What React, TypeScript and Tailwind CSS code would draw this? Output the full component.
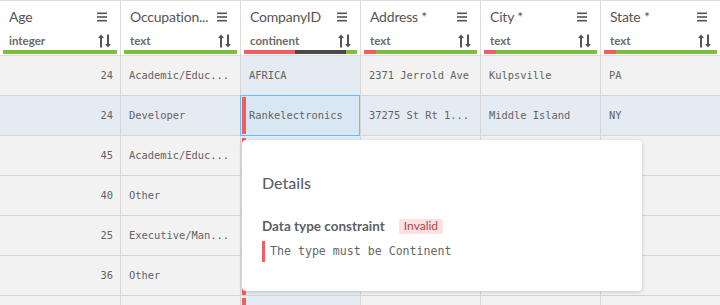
import React from "react";

const sans = { fontFamily: "Lato, 'Open Sans', sans-serif" };
const mono = { fontFamily: "'DejaVu Sans Mono', 'Liberation Mono', monospace" };

type Seg = { color: string; w: number };
type Col = { title: string; type: string; bar: Seg[] };

const cols: Col[] = [
  { title: "Age", type: "integer", bar: [{ color: "#80bc41", w: 1 }] },
  { title: "Occupation...", type: "text", bar: [{ color: "#80bc41", w: 1 }] },
  {
    title: "CompanyID",
    type: "continent",
    bar: [
      { color: "#ee5e63", w: 51 },
      { color: "#4a4a4a", w: 51 },
      { color: "#80bc41", w: 11 },
    ],
  },
  { title: "Address *", type: "text", bar: [{ color: "#ee5e63", w: 12 }, { color: "#80bc41", w: 101 }] },
  { title: "City *", type: "text", bar: [{ color: "#ee5e63", w: 12 }, { color: "#80bc41", w: 101 }] },
  { title: "State *", type: "text", bar: [{ color: "#ee5e63", w: 12 }, { color: "#80bc41", w: 101 }] },
];

const rows: string[][] = [
  ["24", "Academic/Educ...", "AFRICA", "2371 Jerrold Ave", "Kulpsville", "PA"],
  ["24", "Developer", "Rankelectronics", "37275 St Rt 1...", "Middle Island", "NY"],
  ["45", "Academic/Educ...", "", "", "", ""],
  ["40", "Other", "", "", "", ""],
  ["25", "Executive/Man...", "", "", "", ""],
  ["36", "Other", "", "", "", ""],
  ["", "", "", "", "", ""],
];

function Menu() {
  return (
    <svg width="10" height="10" viewBox="0 0 10 10">
      <rect x="0" y="0.5" width="10" height="1.6" fill="#555" />
      <rect x="0" y="4.2" width="10" height="1.6" fill="#555" />
      <rect x="0" y="7.9" width="10" height="1.6" fill="#555" />
    </svg>
  );
}

function Sort() {
  return (
    <svg width="13" height="14" viewBox="0 0 13 14">
      <path d="M3 13.5V2.5" stroke="#555" strokeWidth="2" fill="none" />
      <path d="M0 4L3 0.5L6 4Z" fill="#555" />
      <path d="M10 0.5V11.5" stroke="#555" strokeWidth="2" fill="none" />
      <path d="M7 10L10 13.5L13 10Z" fill="#555" />
    </svg>
  );
}

export default function App() {
  return (
    <div className="relative w-[720px] h-[305px] overflow-hidden bg-[#f2f2f2]">
      {/* header */}
      <div className="flex h-[56px] bg-white border-t border-b border-[#dcdcdc]">
        {cols.map((c, i) => (
          <div
            key={i}
            className={`flex flex-col w-[120px] shrink-0 ${i > 0 ? "border-l border-[#dcdcdc]" : ""}`}
          >
            <div className="flex items-center justify-between h-[30px] pl-[9px] pr-[13px] pt-[1px]">
              <span className="text-[14px] tracking-[-0.2px] text-[#555]" style={sans}>
                {c.title}
              </span>
              <Menu />
            </div>
            <div className="flex items-center justify-between h-[19px] pl-[9px] pr-[9px]">
              <span className="text-[11.5px] font-bold text-[#6a6a6a]" style={sans}>
                {c.type}
              </span>
              <Sort />
            </div>
            <div className="flex h-[4px] mx-[3px]">
              {c.bar.map((s, j) => (
                <div key={j} className="h-full" style={{ flexGrow: s.w, backgroundColor: s.color }} />
              ))}
            </div>
          </div>
        ))}
      </div>

      {/* body */}
      {rows.map((r, ri) => {
        const selRow = ri === 1;
        return (
          <div key={ri} className={`flex h-[40px] border-b border-[#d6d6d6] ${selRow ? "bg-[#e4ebf3]" : "bg-[#f2f2f2]"}`}>
            {r.map((v, ci) => {
              const isComp = ci === 2;
              const selCell = selRow && isComp;
              const marker = isComp && ri >= 1;
              return (
                <div
                  key={ci}
                  className={`relative flex items-center w-[120px] shrink-0 text-[10.4px] text-[#636363] ${
                    ci > 0 ? "border-l border-[#d6d6d6]" : ""
                  } ${ci === 0 ? "justify-end pr-[7px]" : "pl-[8px]"} ${
                    isComp ? (selCell ? "bg-[#d8e7f3]" : "bg-[#e4ebf3]") : ""
                  }`}
                  style={mono}
                >
                  {selCell && (
                    <div className="absolute left-[-1px] top-[-1px] right-0 bottom-[-1px] border border-[#6cbcf0]" />
                  )}
                  {marker && (
                    <div className={`absolute left-[1px] w-[4px] bg-[#ee5e63] ${selCell ? "top-[1px] bottom-[1px]" : "top-[2px] bottom-0"}`} />
                  )}
                  <span className="relative whitespace-nowrap">{v}</span>
                </div>
              );
            })}
          </div>
        );
      })}

      {/* popup */}
      <div className="absolute left-[242px] top-[140px] w-[400px] h-[151px] bg-white rounded-[4px] shadow-[0_1px_4px_rgba(0,0,0,0.18)] px-[20px] pt-[32px]">
        <div className="text-[16px] font-medium text-[#5b5f6b] leading-[22px]" style={sans}>
          Details
        </div>
        <div className="flex items-center mt-[24px] h-[16px]">
          <span className="text-[13.5px] font-bold text-[#5b5f6b]" style={sans}>
            Data type constraint
          </span>
          <span
            className="ml-[14px] h-[15px] px-[5px] flex items-center rounded-[2px] bg-[#fde0e0] text-[12px] text-[#b4444a]"
            style={sans}
          >
            Invalid
          </span>
        </div>
        <div className="flex items-center mt-[7px] h-[21px] border-l-[3px] border-[#ee5e63] pl-[5px]">
          <span className="text-[11.6px] text-[#666]" style={mono}>
            The type must be Continent
          </span>
        </div>
      </div>
    </div>
  );
}
